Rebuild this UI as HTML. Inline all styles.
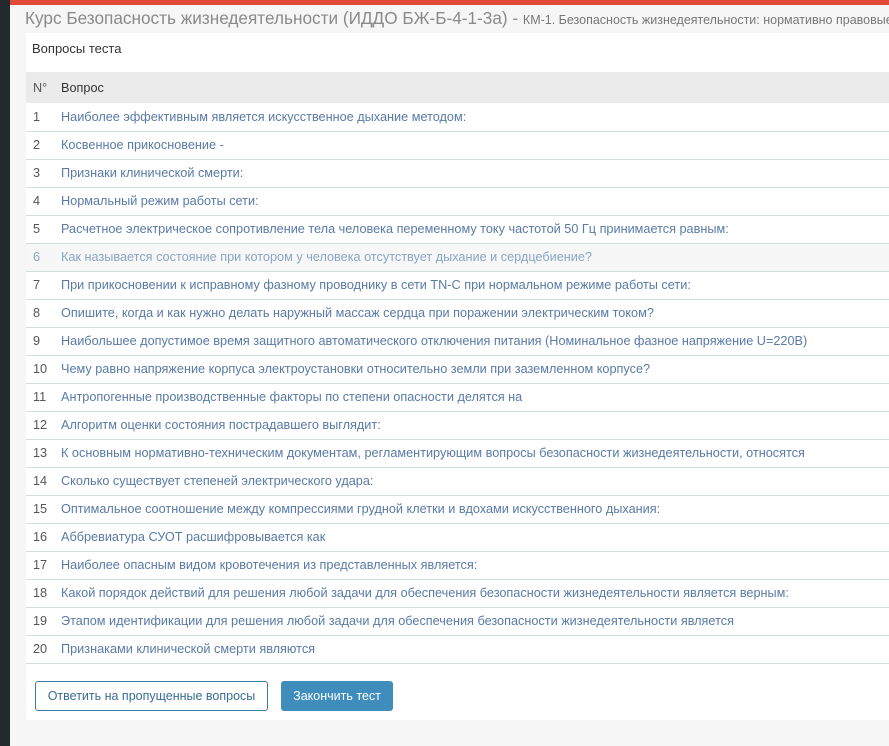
<!DOCTYPE html>
<html><head><meta charset="utf-8"><style>
*{box-sizing:border-box;margin:0;padding:0}
html,body{width:889px;height:746px;overflow:hidden}
body{background:#f6f6f6;font-family:"Liberation Sans",sans-serif;position:relative}
.side{position:absolute;left:0;top:0;width:10px;height:746px;background:#232a2d}
.red{position:absolute;left:10px;top:0;width:879px;height:5px;background:#e04a37}
.title{position:absolute;left:25px;top:8px;width:864px;overflow:hidden;white-space:nowrap;color:#8a8a8a;font-size:17.2px}
.title small{font-size:12.5px;color:#777}
.panel{position:absolute;left:26px;top:33px;width:863px;height:687px;background:#fff;overflow:hidden}
.ph{position:absolute;left:6px;top:8px;font-size:13px;color:#333}
table{position:absolute;left:0;top:39px;width:863px;border-collapse:collapse;font-size:12.7px}
th{background:#ebebeb;height:31px;text-align:left;font-weight:normal;color:#333}
td{height:28px;border-bottom:1px solid #cfe0dc;color:#5a7aa6;white-space:nowrap}
td:first-child,th:first-child{width:35px;padding-left:7px;color:#555}
tr.h td{background:#f7f7f7;color:#8aa6c3}
.b1{position:absolute;left:9px;top:648px;width:233px;height:30px;border:1px solid #3a7ca8;border-radius:3px;color:#3a6d96;font-size:12.5px;text-align:center;line-height:28px}
.b2{position:absolute;left:255px;top:648px;width:112px;height:30px;background:#3f8dbd;border-radius:3px;color:#fff;font-size:12.5px;text-align:center;line-height:30px}
</style></head><body>
<div class="side"></div><div class="red"></div>
<div class="title">Курс Безопасность жизнедеятельности (ИДДО БЖ-Б-4-1-3а) - <small>КМ-1. Безопасность жизнедеятельности: нормативно правовые</small></div>
<div class="panel">
<div class="ph">Вопросы теста</div>
<table>
<tr><th>N°</th><th>Вопрос</th></tr>
<tr><td>1</td><td>Наиболее эффективным является искусственное дыхание методом:</td></tr>
<tr><td>2</td><td>Косвенное прикосновение -</td></tr>
<tr><td>3</td><td>Признаки клинической смерти:</td></tr>
<tr><td>4</td><td>Нормальный режим работы сети:</td></tr>
<tr><td>5</td><td>Расчетное электрическое сопротивление тела человека переменному току частотой 50 Гц принимается равным:</td></tr>
<tr class="h"><td>6</td><td>Как называется состояние при котором у человека отсутствует дыхание и сердцебиение?</td></tr>
<tr><td>7</td><td>При прикосновении к исправному фазному проводнику в сети TN-C при нормальном режиме работы сети:</td></tr>
<tr><td>8</td><td>Опишите, когда и как нужно делать наружный массаж сердца при поражении электрическим током?</td></tr>
<tr><td>9</td><td>Наибольшее допустимое время защитного автоматического отключения питания (Номинальное фазное напряжение U=220В)</td></tr>
<tr><td>10</td><td>Чему равно напряжение корпуса электроустановки относительно земли при заземленном корпусе?</td></tr>
<tr><td>11</td><td>Антропогенные производственные факторы по степени опасности делятся на</td></tr>
<tr><td>12</td><td>Алгоритм оценки состояния пострадавшего выглядит:</td></tr>
<tr><td>13</td><td>К основным нормативно-техническим документам, регламентирующим вопросы безопасности жизнедеятельности, относятся</td></tr>
<tr><td>14</td><td>Сколько существует степеней электрического удара:</td></tr>
<tr><td>15</td><td>Оптимальное соотношение между компрессиями грудной клетки и вдохами искусственного дыхания:</td></tr>
<tr><td>16</td><td>Аббревиатура СУОТ расшифровывается как</td></tr>
<tr><td>17</td><td>Наиболее опасным видом кровотечения из представленных является:</td></tr>
<tr><td>18</td><td>Какой порядок действий для решения любой задачи для обеспечения безопасности жизнедеятельности является верным:</td></tr>
<tr><td>19</td><td>Этапом идентификации для решения любой задачи для обеспечения безопасности жизнедеятельности является</td></tr>
<tr><td>20</td><td>Признаками клинической смерти являются</td></tr>
</table>
<div class="b1">Ответить на пропущенные вопросы</div>
<div class="b2">Закончить тест</div>
</div>
</body></html>
